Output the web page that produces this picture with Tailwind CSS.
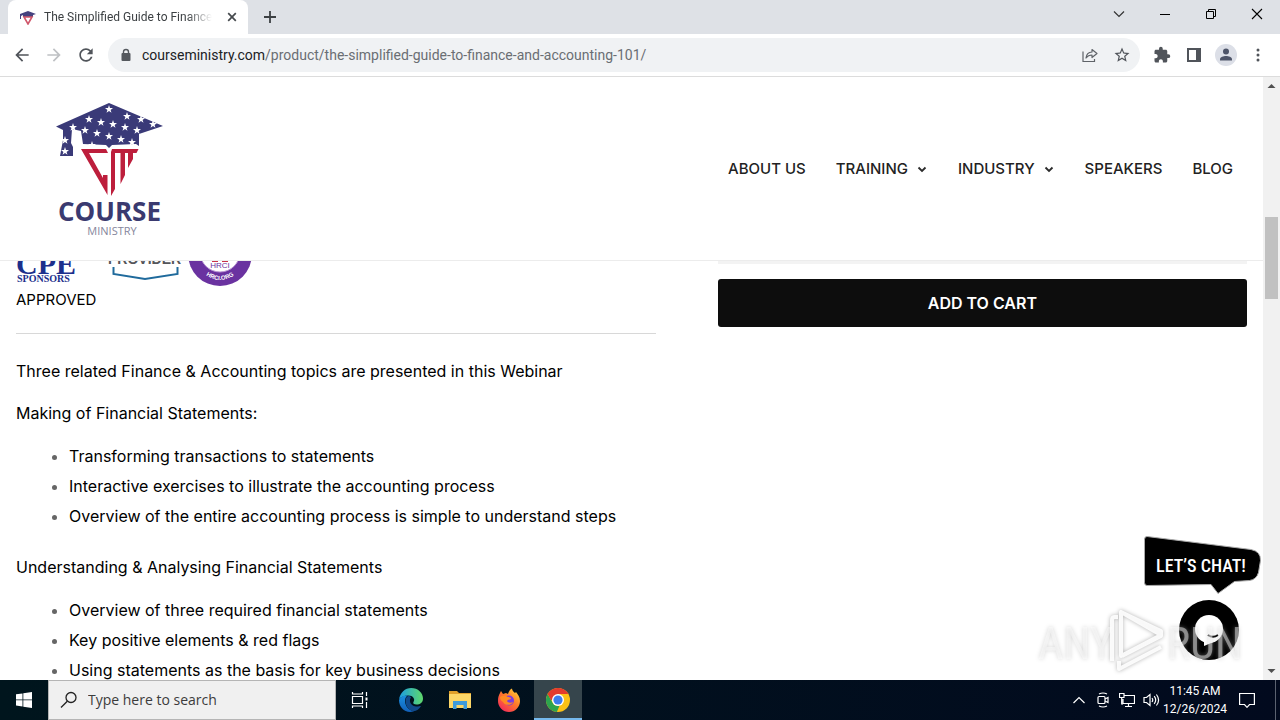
<!DOCTYPE html>
<html lang="en">
<head>
  <meta charset="UTF-8">
  <meta name="viewport" content="width=device-width, initial-scale=1.0">
  <title>The Simplified Guide to Finance and Accounting 101</title>
  <script src="https://cdn.jsdelivr.net/npm/@tailwindcss/browser@4"></script>
</head>
<body class="h-screen flex flex-col overflow-hidden bg-white font-['Open_Sans',sans-serif]">

  <!-- Tab strip -->
  <div class="flex h-[34px] shrink-0 bg-[#dee1e6] pl-2">
    <div class="flex items-center w-60 bg-white rounded-t-lg pl-3 pr-2">
      <svg class="w-4 h-4 shrink-0" viewBox="0 0 16 16">
        <path d="M0 5L8 2l8 3-3 1v2H3V6L1 7v3H0z" fill="#45427f"/>
        <path d="M4 8h8l-4 7z" fill="none" stroke="#d0576b" stroke-width="1.6"/>
      </svg>
      <span class="ml-2 flex-1 overflow-hidden whitespace-nowrap font-[Roboto,sans-serif] text-xs text-[#3c4043] [mask-image:linear-gradient(to_right,black_85%,transparent)]">The Simplified Guide to Finance</span>
      <button class="ml-3 w-4 h-4 flex items-center justify-center" aria-label="Close tab">
        <svg class="w-4 h-4" viewBox="0 0 16 16" stroke="#45494d" stroke-width="1.7"><path d="M4.2 4.2l7.6 7.6M11.8 4.2l-7.6 7.6"/></svg>
      </button>
    </div>
    <button class="ml-1.5 w-8 flex items-center justify-center" aria-label="New tab">
      <svg class="w-4 h-4" viewBox="0 0 16 16" stroke="#3c4043" stroke-width="1.8"><path d="M8 2v12M2 8h12"/></svg>
    </button>
    <div class="ml-auto flex h-7">
      <button class="w-[46px] flex items-center justify-center" aria-label="Search tabs">
        <svg class="w-3 h-3" viewBox="0 0 12 12" fill="none" stroke="#333" stroke-width="1.2"><path d="M1 3.5l5 5 5-5"/></svg>
      </button>
      <button class="w-[46px] flex items-center justify-center" aria-label="Minimize">
        <svg class="w-3 h-3" viewBox="0 0 12 12" stroke="#000"><path d="M1 6.5h10"/></svg>
      </button>
      <button class="w-[46px] flex items-center justify-center" aria-label="Restore">
        <svg class="w-3 h-3" viewBox="0 0 12 12" fill="none" stroke="#000"><path d="M1.5 3.5h7v7h-7zM3.5 3.5v-2h7v7h-2"/></svg>
      </button>
      <button class="w-[46px] flex items-center justify-center" aria-label="Close">
        <svg class="w-3 h-3" viewBox="0 0 12 12" stroke="#000" stroke-width="1.1"><path d="M1 1l10 10M11 1L1 11"/></svg>
      </button>
    </div>
  </div>

  <!-- Toolbar -->
  <div class="flex items-center h-[43px] shrink-0 px-1.5 border-b border-[#dcdcdc]">
    <button class="w-8 flex justify-center" aria-label="Back">
      <svg class="w-5 h-5" viewBox="0 0 24 24" fill="#50545a"><path d="M20 11H7.83l5.59-5.59L12 4l-8 8 8 8 1.41-1.41L7.83 13H20v-2z"/></svg>
    </button>
    <button class="w-8 flex justify-center" aria-label="Forward">
      <svg class="w-5 h-5" viewBox="0 0 24 24" fill="#bfc1c4"><path d="M12 4l-1.41 1.41L16.17 11H4v2h12.17l-5.58 5.59L12 20l8-8z"/></svg>
    </button>
    <button class="w-8 flex justify-center" aria-label="Reload">
      <svg class="w-5 h-5" viewBox="0 0 24 24" fill="#50545a"><path d="M17.65 6.35C16.2 4.9 14.21 4 12 4c-4.42 0-7.99 3.58-7.99 8s3.57 8 7.99 8c3.73 0 6.84-2.55 7.73-6h-2.08c-.82 2.33-3.04 4-5.65 4-3.31 0-6-2.69-6-6s2.69-6 6-6c1.66 0 3.14.69 4.22 1.78L13 11h7V4l-2.35 2.35z"/></svg>
    </button>
    <div class="ml-1.5 mr-1.5 flex flex-1 items-center h-[34px] rounded-full bg-[#f0f2f4] pl-3 pr-0.5">
      <svg class="w-3 h-3.5 shrink-0" viewBox="0 0 12 14"><rect x="1.5" y="5" width="9" height="8" rx="1" fill="#55595e"/><path d="M3.5 5.5V4a2.5 2.5 0 015 0v1.5" fill="none" stroke="#55595e" stroke-width="1.4"/></svg>
      <a href="#" class="ml-2.5 flex-1 font-[Roboto,sans-serif] text-sm leading-5 text-[#6a6e73] whitespace-nowrap"><span class="text-[#202124]">courseministry.com</span>/product/the-simplified-guide-to-finance-and-accounting-101/</a>
      <button class="w-8 flex justify-center" aria-label="Share">
        <svg class="w-4 h-4" viewBox="0 0 16 16" fill="none" stroke="#5f6368" stroke-width="1.2"><path d="M1 4.5v10h11.5V12"/><path d="M4 11c.4-4 2.5-5.800 6-6V2.5L15 6.500l-5 4V8c-2.600 0-4.400.8-6 3z" stroke-linejoin="round"/></svg>
      </button>
      <button class="w-8 flex justify-center" aria-label="Bookmark this page">
        <svg class="w-[18px] h-[18px]" viewBox="0 0 24 24" fill="#50545a"><path d="M22 9.240l-7.190-.62L12 2 9.190 8.630 2 9.240l5.460 4.730L5.820 21 12 17.270 18.180 21l-1.630-7.030L22 9.240zM12 15.400l-3.760 2.270 1-4.280-3.320-2.880 4.380-.38L12 6.100l1.710 4.040 4.380.38-3.320 2.880 1 4.280L12 15.400z"/></svg>
      </button>
    </div>
    <button class="w-8 flex justify-center" aria-label="Extensions">
      <svg class="w-[18px] h-[18px]" viewBox="0 0 24 24" fill="#50545a"><path d="M20.500 11H19V7c0-1.100-.9-2-2-2h-4V3.500a2.500 2.500 0 00-5 0V5H4c-1.100 0-1.990.9-1.990 2v3.800H3.500c1.490 0 2.700 1.210 2.700 2.700s-1.210 2.700-2.700 2.700H2V20c0 1.100.9 2 2 2h3.800v-1.500c0-1.490 1.210-2.700 2.700-2.700s2.700 1.210 2.700 2.700V22H17c1.100 0 2-.9 2-2v-4h1.500a2.500 2.500 0 000-5z"/></svg>
    </button>
    <button class="w-8 flex justify-center" aria-label="Side panel">
      <svg class="w-4 h-4" viewBox="0 0 16 16"><path d="M1 1h14v14H1zM3 3v10h7V3z" fill="#50545a" fill-rule="evenodd"/></svg>
    </button>
    <button class="w-8 flex justify-center" aria-label="Profile">
      <svg class="w-[22px] h-[22px]" viewBox="0 0 22 22"><circle cx="11" cy="11" r="11" fill="#dcdfe7"/><circle cx="11" cy="7.5" r="3" fill="#4d5468"/><path d="M5 16.500v-1.300c0-2 3.500-3.200 6-3.200s6 1.200 6 3.200v1.300z" fill="#4d5468"/></svg>
    </button>
    <button class="w-8 flex justify-center" aria-label="Menu">
      <svg class="w-4 h-4" viewBox="0 0 16 16" fill="#50545a"><circle cx="8" cy="3" r="1.5"/><circle cx="8" cy="8" r="1.5"/><circle cx="8" cy="13" r="1.5"/></svg>
    </button>
  </div>

  <!-- Web page -->
  <div class="relative flex flex-1 min-h-0">
    <div class="flex-1 min-w-0 flex flex-col overflow-hidden font-[Inter,sans-serif]">

      <header class="relative z-10 flex items-center justify-between h-[184px] shrink-0 bg-white border-b border-[#ececec] pl-[52px] pr-[30px]">
        <a href="#" aria-label="Course Ministry">
          <svg class="w-[116px] h-[140px]" viewBox="52 98 116 140">
            <path d="M56 125.500L109 102l54 23-24 8v12l-3-2-24 1-3 3-3-3-23-1-2-13-9-2-1 14 2 4v9H60l3-16v-10z" fill="#3a3a78"/>
            <g fill="#fff">
              <path id="star" d="M0-4l1 2.900 3 .1-2.400 1.900.9 2.900L0 2.100l-2.500 1.700.9-2.900L-4-1l3-.1z" transform="translate(109 108)"/>
              <use href="#star" transform="translate(-20 10)"/>
              <use href="#star" transform="translate(-36 18)"/>
              <use href="#star" transform="translate(-8 13)"/>
              <use href="#star" transform="translate(18 7)"/>
              <use href="#star" transform="translate(32 10)"/>
              <use href="#star" transform="translate(4 15)"/>
              <use href="#star" transform="translate(16 18)"/>
              <use href="#star" transform="translate(28 21)"/>
              <use href="#star" transform="translate(44 15)"/>
              <use href="#star" transform="translate(-24 21)"/>
              <use href="#star" transform="translate(-12 24)"/>
              <use href="#star" transform="translate(0 27)"/>
              <use href="#star" transform="translate(12 30)"/>
              <use href="#star" transform="translate(23 33)"/>
              <use href="#star" transform="translate(-17 36)"/>
              <use href="#star" transform="translate(-44 31)"/>
              <use href="#star" transform="translate(-44 42)"/>
            </g>
            <g fill="#bd1e3c">
              <path d="M81 148h25l2 4H89l14 25v-3h4.500v20z"/>
              <path d="M112 148h26.500l-2 4H133v6l-5 9v-15h-3v22l-4.500 9v-31H115v36l-4 7v-44z"/>
            </g>
            <text x="109.500" y="220" text-anchor="middle" font-family="Open Sans" font-weight="700" font-size="26" fill="#3a3a70">COURSE</text>
            <text x="112" y="234" text-anchor="middle" font-family="Open Sans" font-size="11" fill="#85869c">MINISTRY</text>
          </svg>
        </a>
        <nav class="flex items-center gap-[30px] text-[15px] leading-6 font-medium text-[#222]">
          <a href="#">ABOUT US</a>
          <a href="#" class="flex items-center gap-2">TRAINING
            <svg class="w-3 h-3" viewBox="0 0 12 12" fill="none" stroke="#2b2b2b" stroke-width="1.8"><path d="M2.500 4.500L6 8l3.500-3.500"/></svg>
          </a>
          <a href="#" class="flex items-center gap-2">INDUSTRY
            <svg class="w-3 h-3" viewBox="0 0 12 12" fill="none" stroke="#2b2b2b" stroke-width="1.8"><path d="M2.500 4.500L6 8l3.500-3.500"/></svg>
          </a>
          <a href="#">SPEAKERS</a>
          <a href="#">BLOG</a>
        </nav>
      </header>

      <!-- Scrolled under the sticky header -->
      <main class="-mt-[39px] flex justify-between px-4 text-black">
        <article class="w-[52%] text-base">
          <div class="flex h-16">
            <svg class="w-[84px] h-16" viewBox="0 0 84 64" role="img" aria-label="CPE Sponsors">
              <g fill="#1c2f8c" font-family="Liberation Serif">
                <text x="0" y="52" font-size="30" font-weight="700">CPE</text>
                <text x="1" y="60" font-size="10" font-weight="700">SPONSORS</text>
              </g>
            </svg>
            <svg class="ml-2 w-[76px] h-16" viewBox="0 0 76 64" role="img" aria-label="Provider">
              <text x="0" y="42" font-family="Liberation Sans" font-weight="700" font-size="14" fill="#55565a">PROVIDER</text>
              <path d="M5.500 45v7L37 57l32.500-5v-7" fill="none" stroke="#1f6a9c" stroke-width="2"/>
            </svg>
            <svg class="ml-1 w-16 h-16" viewBox="0 0 64 64" role="img" aria-label="HRCI.org">
              <circle cx="32" cy="32" r="32" fill="#6a32a0"/>
              <circle cx="32" cy="30" r="20" fill="#fff" stroke="#b58fd0"/>
              <path d="M24 36h6v4h-6zM34 36h6v4h-6z" fill="#c8324a"/>
              <text x="32" y="46" text-anchor="middle" font-family="Liberation Sans" font-size="8" fill="#6a32a0">HRCI</text>
              <path id="ring" d="M8 44q24 28 48 0" fill="none"/>
              <text font-family="Liberation Sans" font-weight="700" font-size="6" fill="#fff"><textPath href="#ring" startOffset="50%" text-anchor="middle">HRCI.ORG</textPath></text>
            </svg>
          </div>
          <p class="text-[15px] leading-7">APPROVED</p>
          <hr class="mt-[19px] mb-[23px] border-[#d8d8d8]">
          <p class="leading-7 mb-3.5">Three related Finance &amp; Accounting topics are presented in this Webinar</p>
          <p class="leading-7 mb-3.5">Making of Financial Statements:</p>
          <ul class="list-disc pl-[53px] mb-[22px] leading-[30px] marker:text-[#666]">
            <li>Transforming transactions to statements</li>
            <li>Interactive exercises to illustrate the accounting process</li>
            <li>Overview of the entire accounting process is simple to understand steps</li>
          </ul>
          <p class="leading-7 mb-3.5">Understanding &amp; Analysing Financial Statements</p>
          <ul class="list-disc pl-[53px] leading-[30px] marker:text-[#666]">
            <li>Overview of three required financial statements</li>
            <li>Key positive elements &amp; red flags</li>
            <li>Using statements as the basis for key business decisions</li>
          </ul>
        </article>
        <aside class="w-[43%]">
          <div class="h-[42px] bg-[#f3f3f3]"></div>
          <button class="mt-[15px] w-full h-12 rounded-[3px] bg-[#0d0d0d] text-white text-base font-semibold">ADD TO CART</button>
        </aside>
      </main>
    </div>

    <!-- Scrollbar -->
    <div class="w-[17px] flex flex-col items-center bg-[#f1f1f1]">
      <svg class="w-[17px] h-[17px]" viewBox="0 0 17 17"><path d="M4.500 11l4-4 4 4z" fill="#505050"/></svg>
      <div class="mt-[123px] w-[13px] h-[82px] bg-[#c1c1c1]"></div>
      <svg class="mt-auto w-[17px] h-[17px]" viewBox="0 0 17 17"><path d="M4.500 6l4 4 4-4z" fill="#505050"/></svg>
    </div>

    <!-- Chat widget -->
    <button class="absolute right-[18px] bottom-5 w-[120px] h-[126px]" aria-label="Let's chat!">
      <svg class="w-full h-full" viewBox="1142 534 120 126">
        <path d="M1147 536.500l104 13q10 2 9.500 11l-2 12q-2 7-9 8l-15 1-16.500 12-7-9-64 1q-2.500 0-2.500-3v-43q0-3 2.500-3z" fill="#000" stroke="#aaa" stroke-width="1"/>
        <text x="1201" y="572" text-anchor="middle" font-family="Roboto Condensed, Roboto, sans-serif" font-weight="500" font-size="18" fill="#fff">LET’S CHAT!</text>
        <circle cx="1209" cy="630" r="30" fill="#000"/>
        <circle cx="1209" cy="629" r="14" fill="#fff"/>
        <path d="M1204 640v6l12-5z" fill="#fff"/>
        <path d="M1208 635q5 3.500 10 0" fill="none" stroke="#000" stroke-width="2"/>
      </svg>
    </button>

    <!-- Watermark -->
    <svg class="pointer-events-none absolute right-[34px] bottom-1.5 w-[212px] h-[68px] drop-shadow-[0_0_2px_#aaa]" viewBox="1034 606 212 68" aria-hidden="true">
      <g fill="#fff" fill-opacity="0.45" font-family="Roboto Condensed, Roboto, sans-serif" font-size="44">
        <text x="1038" y="659">ANY</text>
        <text x="1167" y="659">RUN</text>
      </g>
      <g fill="none" stroke="#fff" stroke-width="4" stroke-opacity="0.9" stroke-linejoin="round">
        <path d="M1112 661v-41q0-3 3-3h3"/>
        <path d="M1121 612v44l40-21zM1121 612l40 19v5l-39 20M1119 661v8l42-22"/>
      </g>
    </svg>
  </div>

  <!-- Taskbar -->
  <footer class="flex h-10 shrink-0 bg-linear-to-r from-[#00151d] to-[#020a1e] text-white">
    <button class="w-12 flex items-center justify-center" aria-label="Start">
      <svg class="w-4 h-4" viewBox="0 0 16 16" fill="#fff"><path d="M0 2.300l6.500-.9v6.100H0zM7.300 1.300L16 0v7.500H7.300zM0 8.300h6.500v6.100L0 13.500zM7.300 8.300H16V16l-8.700-1.300z"/></svg>
    </button>
    <label class="flex items-center w-72 bg-[#f0f0f0] border border-[#b5b5b5] pl-[11px]">
      <svg class="w-[18px] h-[18px] shrink-0" viewBox="0 0 18 18" fill="none" stroke="#222" stroke-width="1.3"><circle cx="11" cy="6.5" r="5"/><path d="M7.300 10.200L1 16.500"/></svg>
      <input type="text" aria-label="Search" placeholder="Type here to search" class="ml-2.5 w-56 text-sm placeholder:text-[#3c3c3c] outline-none">
    </label>
    <button class="w-12 flex items-center justify-center" aria-label="Task view">
      <svg class="w-[18px] h-[18px]" viewBox="0 0 18 18" fill="none" stroke="#fff" stroke-width="1.2"><path d="M1.500 5.500h10v7h-10zM1.500 1v2h10V1M1.500 17v-2h10v2M15.500 1v4M15.500 11v6"/><path d="M14.500 6.500h2v3h-2z" fill="#fff" stroke="none"/></svg>
    </button>
    <div class="ml-[3px] flex gap-px">
      <button class="w-12 flex items-center justify-center" aria-label="Edge">
        <svg class="w-6 h-6" viewBox="0 0 24 24">
          <defs>
            <linearGradient id="edgeTop" x1="0" x2="1"><stop offset="0" stop-color="#1b9de2"/><stop offset="1" stop-color="#5fd96b"/></linearGradient>
            <linearGradient id="edgeLow" x1="0" y1="0" x2="0" y2="1"><stop offset="0" stop-color="#1a8fe0"/><stop offset="1" stop-color="#1260b8"/></linearGradient>
          </defs>
          <path d="M0 12C1 4.500 6 0 12.200 0 19 0 24 5 24 10.500c0 4-3 6-6.500 6-2.500 0-4-1-3-2.500 2-3-.5-6.500-5-6.500C5 7.500 1 9 0 12z" fill="url(#edgeTop)"/>
          <path d="M0 12c1-3 4.500-4.800 8.500-4.500-1.500 1-2.500 3-2.500 5.500C6 18 10 22.500 15 23.200 7 26 0 20 0 12z" fill="url(#edgeLow)"/>
          <path d="M6.500 12.500c0-2.500 1.500-4 3-4.500 1 0 2 .5 2.500 1.500-2 2-1.500 8 5 9 2.500.3 4.500-1 5-.5-1.500 3-4.500 5-7.500 5.200-4.500-.5-8-5-8-10.700z" fill="#114a8b"/>
        </svg>
      </button>
      <button class="w-12 flex items-center justify-center" aria-label="File Explorer">
        <svg class="w-[22px] h-5" viewBox="0 0 22 20"><path d="M0 1h8l2 2h12v5H0z" fill="#e0a02a"/><path d="M0 4h22v14H0z" fill="#fcd667"/><path d="M4 19v-8h14v8h-3.500v-4h-7v4z" fill="#3e9bdc"/></svg>
      </button>
      <button class="w-12 flex items-center justify-center" aria-label="Firefox">
        <svg class="w-6 h-6" viewBox="0 0 24 24">
          <defs><linearGradient id="fox" x1="1" y1="0" x2="0.2" y2="1"><stop offset="0" stop-color="#ffe03a"/><stop offset="0.5" stop-color="#ff7a2a"/><stop offset="1" stop-color="#f2285c"/></linearGradient></defs>
          <path d="M3 5l1-2 2 3 3-1 2 1c1-3 2-4.500 4-5.500 0 2 2 3.500 3 4.500l1-1c2 2.500 4 5 4 9a11 11 0 01-22 0c0-3 .5-5.500 2-8z" fill="url(#fox)"/>
          <circle cx="12" cy="12.5" r="5" fill="#7a3be0"/>
          <path d="M3 9c3-2 6-1 8 0 2 0 3 1 3 1.500-1 1.500-3 1-4 2.500 1 2 4 2 6 1-1 3.500-8 4-10 0C4 13 3 11 3 9z" fill="#ff8a22"/>
        </svg>
      </button>
      <button class="w-12 flex items-center justify-center bg-[#36454c] border-b-2 border-[#76b9ed] pt-0.5" aria-label="Chrome">
        <svg class="w-6 h-6" viewBox="0 0 24 24">
          <circle cx="12" cy="12" r="12" fill="#fbc116"/>
          <path d="M1.600 6l5.200 9A6 6 0 0012 18l1.500-.2L10.800 24A12 12 0 011.600 6z" fill="#2da44e"/>
          <path d="M1.600 6A12 12 0 0122.400 6H12v6H5z" fill="#e33b2e"/>
          <circle cx="12" cy="12" r="6" fill="#fff"/>
          <circle cx="12" cy="12" r="4.6" fill="#3b7ded"/>
        </svg>
      </button>
    </div>
    <div class="ml-auto flex items-center">
      <button class="w-6 flex justify-center" aria-label="Show hidden icons">
        <svg class="w-3 h-3" viewBox="0 0 12 12" fill="none" stroke="#fff" stroke-width="1.2"><path d="M.5 9L6 3.500 11.500 9"/></svg>
      </button>
      <button class="w-6 flex justify-center" aria-label="Meet now">
        <svg class="w-4 h-4" viewBox="0 0 16 16" fill="none" stroke="#fff" stroke-width="1.2"><rect x="3" y="4.5" width="7" height="7" rx="1"/><path d="M10 7l3-1.500v5L10 9M4 2q4-2 8 0M4 14q4 2 8 0"/></svg>
      </button>
      <button class="w-6 flex justify-center" aria-label="Network">
        <svg class="w-4 h-4" viewBox="0 0 16 16" fill="none" stroke="#fff" stroke-width="1.2"><path d="M5 3.500h10.500v8H4V7M9.500 11.500v3M6 14.500h7M.5 1.500H5v4H.5zM2.700 5.500V12H4"/></svg>
      </button>
      <button class="w-6 flex justify-center" aria-label="Volume">
        <svg class="w-[17px] h-4" viewBox="0 0 17 16" fill="none" stroke="#fff" stroke-width="1.2"><path d="M1 5.500h2.500L7 2.500v11l-3.500-3H1zM9 6q1.500 2 0 4M11.200 4.200q3 3.800 0 7.600M13.400 2.500q4.400 5.500 0 11"/></svg>
      </button>
      <time class="w-16 text-center font-[Roboto,sans-serif] text-xs leading-[18px] whitespace-nowrap" datetime="2024-12-26T11:45">11:45 AM<br>12/26/2024</time>
      <button class="w-10 flex justify-center" aria-label="Notifications">
        <svg class="w-4 h-4" viewBox="0 0 16 16" fill="none" stroke="#fff" stroke-width="1.2"><path d="M.6 1.500h14.800v11h-4.900L8 15.300l-2.500-2.800H.6z"/></svg>
      </button>
      <div class="ml-2 mr-1 w-px h-10 bg-[#5b6270]"></div>
    </div>
  </footer>
</body>
</html>
